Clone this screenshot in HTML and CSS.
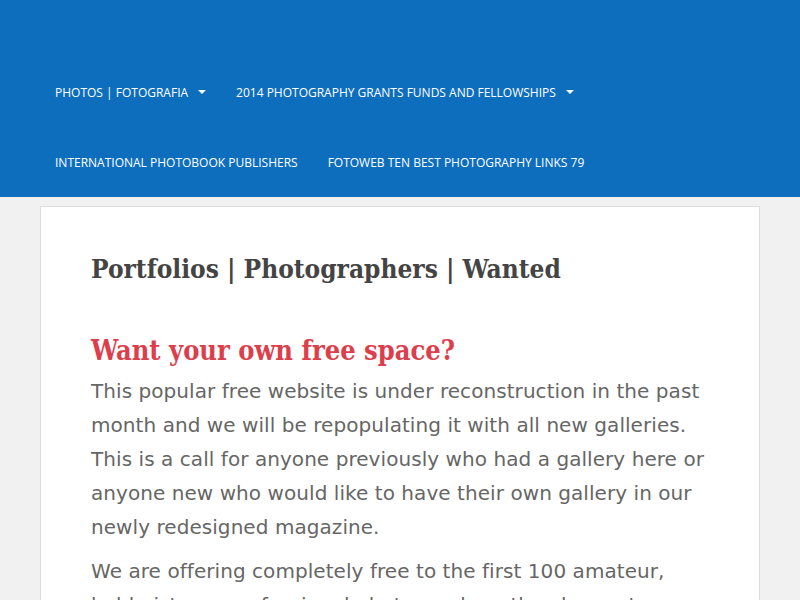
FILE: index.html
```html
<!DOCTYPE html>
<html>
<head>
<meta charset="utf-8">
<link rel="stylesheet" href="styles.css">
</head>
<body>
<header class="site-header">
  <nav class="main-nav">
    <ul class="menu">
      <li class="menu-item">PHOTOS | FOTOGRAFIA <span class="caret"></span></li>
      <li class="menu-item">2014 PHOTOGRAPHY GRANTS FUNDS AND FELLOWSHIPS <span class="caret"></span></li>
    </ul>
    <ul class="menu">
      <li class="menu-item">INTERNATIONAL PHOTOBOOK PUBLISHERS</li>
      <li class="menu-item">FOTOWEB TEN BEST PHOTOGRAPHY LINKS 79</li>
    </ul>
  </nav>
</header>
<main class="content">
  <article class="card">
    <h1 class="page-title">Portfolios | Photographers | Wanted</h1>
    <h2 class="section-title">Want your own free space?</h2>
    <p class="text">This popular free website is under reconstruction in the past month and we will be repopulating it with all new galleries. This is a call for anyone previously who had a gallery here or anyone new who would like to have their own gallery in our newly redesigned magazine.</p>
    <p class="text">We are offering completely free to the first 100 amateur, hobbyists, or professional photographers the chance to showcase their work in our magazine.</p>
  </article>
</main>
</body>
</html>
```
FILE: styles.css
```css
html, body {
  margin: 0;
  padding: 0;
}
body {
  background: #f1f1f1;
  font-family: "DejaVu Sans", Verdana, sans-serif;
  overflow: hidden;
}
.site-header {
  background: #0e6ebe;
  height: 197px;
  box-sizing: border-box;
  padding-top: 57px;
}
.main-nav {
  padding: 0 40px;
}
.menu {
  list-style: none;
  margin: 0;
  padding: 0;
  display: flex;
}
.menu-item {
  height: 70px;
  padding: 0 15px;
  display: flex;
  align-items: center;
  color: #fff;
  font-family: "Open Sans", sans-serif;
  font-size: 12px;
}
.caret {
  display: inline-block;
  width: 0;
  height: 0;
  margin-left: 10px;
  border-left: 4px solid transparent;
  border-right: 4px solid transparent;
  border-top: 4px solid #fff;
}
.content {
  padding: 9px 40px 0;
}
.card {
  background: #fff;
  border: 1px solid #dddddd;
  padding: 47px 50px 40px;
}
.page-title {
  margin: 0 0 50px;
  font-family: "DejaVu Serif Condensed", "DejaVu Serif", serif;
  font-weight: bold;
  font-size: 26px;
  color: #444;
  line-height: 1.2;
}
.section-title {
  margin: 0 0 6px;
  font-family: "DejaVu Serif Condensed", "DejaVu Serif", serif;
  font-weight: bold;
  font-size: 27px;
  color: #dd3e4c;
  line-height: 1.2;
}
.text {
  margin: 0 0 10px;
  font-size: 20px;
  line-height: 34px;
  letter-spacing: 0.06px;
  color: #666;
}
```
